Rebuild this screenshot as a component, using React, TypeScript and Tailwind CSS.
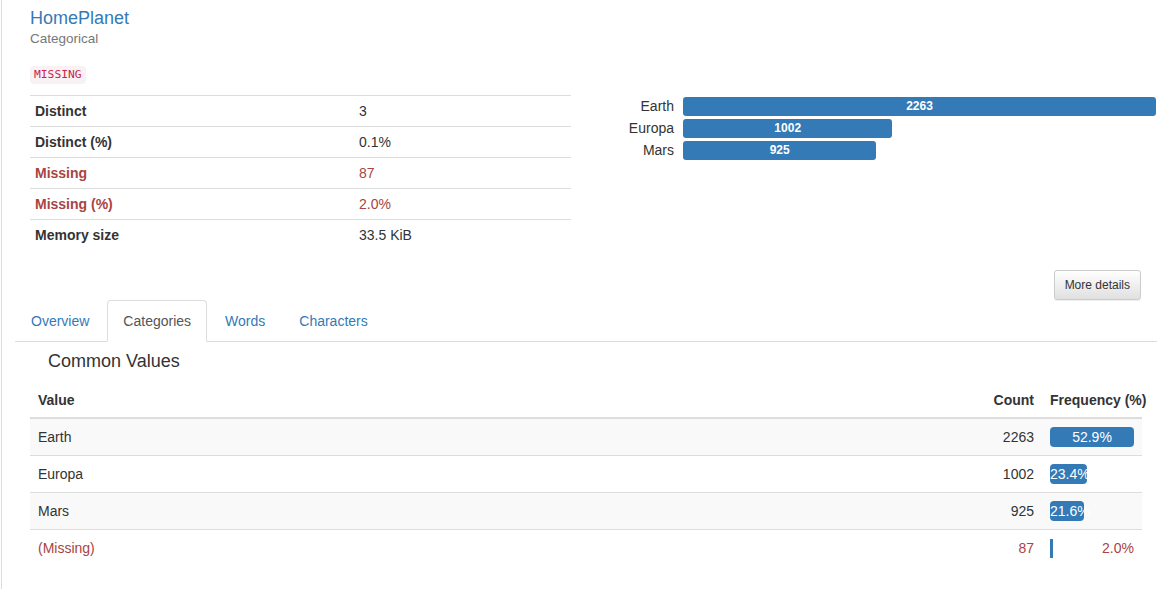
import React from "react";

type Stat = {
  label: string;
  value: string;
  missing?: boolean;
};

type Row = {
  value: string;
  count: number;
  pct: number;
  missing?: boolean;
};

const stats: Stat[] = [
  { label: "Distinct", value: "3" },
  { label: "Distinct (%)", value: "0.1%" },
  { label: "Missing", value: "87", missing: true },
  { label: "Missing (%)", value: "2.0%", missing: true },
  { label: "Memory size", value: "33.5 KiB" },
];

const rows: Row[] = [
  { value: "Earth", count: 2263, pct: 52.9 },
  { value: "Europa", count: 1002, pct: 23.4 },
  { value: "Mars", count: 925, pct: 21.6 },
  { value: "(Missing)", count: 87, pct: 2.0, missing: true },
];

const maxCount = 2263;
const maxPct = 52.9;

function MiniChart() {
  return (
    <div className="flex flex-col gap-[3px] pt-[97px]">
      {rows
        .filter((r) => !r.missing)
        .map((r) => (
          <div key={r.value} className="flex h-[19px] items-center">
            <div className="w-[87px] text-right text-[14px] leading-[19px] text-[#333]">
              {r.value}
            </div>
            <div className="ml-[9px] w-[473px]">
              <div
                className="h-[19px] rounded-[3px] bg-[#337ab7] text-center text-[12px] font-bold leading-[19px] text-white"
                style={{ width: `${(r.count / maxCount) * 100}%` }}
              >
                {r.count}
              </div>
            </div>
          </div>
        ))}
    </div>
  );
}

export default function App() {
  const tabs = ["Overview", "Categories", "Words", "Characters"];

  return (
    <div className="ml-px min-h-[589px] border-l border-[#ddd] bg-white pl-[13px] pr-px font-['Liberation_Sans',Arial,sans-serif] text-[14px] text-[#333]">
      <div className="grid grid-cols-2">
        <div className="px-[15px]">
          <h4 className="mt-[9px] text-[18px] leading-[19.8px]">
            <span className="block text-[#337ab7]">HomePlanet</span>
            <span className="block text-[13.5px] text-[#777]">Categorical</span>
          </h4>
          <div className="mt-[14px]">
            <code className="inline-block h-[18px] rounded-[4px] bg-[#f9f2f4] px-[4px] font-['DejaVu_Sans_Mono',monospace] text-[11.3px] leading-[18px] text-[#c7254e]">
              MISSING
            </code>
          </div>
          <div className="mt-[11px]">
            {stats.map((s) => (
              <div
                key={s.label}
                className={`grid h-[31px] grid-cols-[324px_1fr] items-center border-t border-[#ddd] pt-px ${
                  s.missing ? "text-[#a94442]" : ""
                }`}
              >
                <div className="px-[5px] font-bold">{s.label}</div>
                <div className="px-[5px]">{s.value}</div>
              </div>
            ))}
          </div>
        </div>
        <div className="pl-px">
          <MiniChart />
        </div>
      </div>

      <div className="mt-[20px] flex justify-end pr-[16px]">
        <button className="h-[30px] rounded-[3px] border border-[#ccc] bg-gradient-to-b from-white to-[#e0e0e0] px-[10px] text-[12px] text-[#333] shadow-[0_1px_1px_rgba(0,0,0,0.075)]">
          More details
        </button>
      </div>

      <ul className="flex border-b border-[#ddd]">
        {tabs.map((t) => {
          const active = t === "Categories";
          return (
            <li key={t} className="-mb-px mr-[2px]">
              <span
                className={`block rounded-t-[4px] border px-[15px] py-[10px] leading-[20px] ${
                  active
                    ? "border-[#ddd] border-b-white bg-white text-[#555]"
                    : "border-transparent text-[#337ab7]"
                }`}
              >
                {t}
              </span>
            </li>
          );
        })}
      </ul>

      <h4 className="mt-[10px] pl-[33px] text-[18px] leading-[19.8px] text-[#333]">
        Common Values
      </h4>

      <div className="mt-[12px] px-[15px]">
        <div className="flex h-[36px] items-center border-b-2 border-[#ddd] font-bold">
          <div className="flex-1 px-[8px]">Value</div>
          <div className="w-[57px] px-[8px] text-right">Count</div>
          <div className="w-[100px] whitespace-nowrap px-[8px]">Frequency (%)</div>
        </div>
        {rows.map((r, i) => (
          <div
            key={r.value}
            className={`flex items-center ${i > 0 ? "h-[37px] border-t border-[#ddd]" : "h-[36px]"} ${
              i % 2 === 0 && !r.missing ? "bg-[#f9f9f9]" : ""
            } ${r.missing ? "text-[#a94442]" : ""}`}
          >
            <div className="flex-1 px-[8px]">{r.value}</div>
            <div className="w-[57px] px-[8px] text-right">{r.count}</div>
            <div className="w-[100px] px-[8px]">
              {r.pct < 10 ? (
                <div className="flex items-center justify-between">
                  <div
                    className="h-[19px] bg-[#337ab7]"
                    style={{ width: `${(r.pct / maxPct) * 100}%` }}
                  />
                  <span className="leading-[20px]">{r.pct.toFixed(1)}%</span>
                </div>
              ) : (
                <div
                  className="h-[20px] overflow-visible whitespace-nowrap rounded-[4px] bg-[#337ab7] text-center leading-[20px] text-white"
                  style={{ width: `${(r.pct / maxPct) * 100}%` }}
                >
                  {r.pct.toFixed(1)}%
                </div>
              )}
            </div>
          </div>
        ))}
      </div>
    </div>
  );
}
